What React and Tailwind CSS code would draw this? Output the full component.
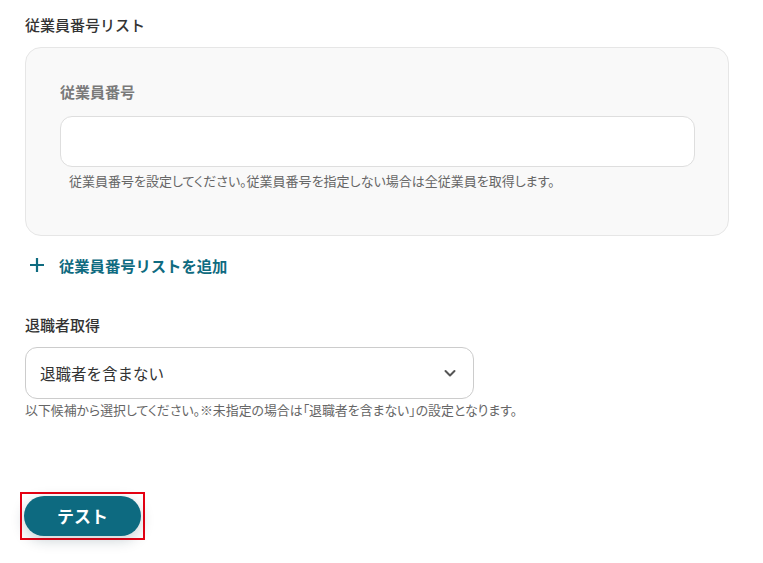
export default function App() {
  return (
    <div
      className="w-[763px] h-[563px] bg-white text-[#333] overflow-hidden"
      style={{ fontFamily: '"Noto Sans CJK JP", "Noto Sans", sans-serif' }}
    >
      <div className="pl-[25px] pr-[34px] pt-[14px]">
        <div className="text-[15px] font-medium leading-[22px]">従業員番号リスト</div>

        <div className="mt-[11px] h-[189px] rounded-[16px] border border-[#e6e6e6] bg-[#f9f9f9] pl-[34px] pr-[33px] pt-[33px]">
          <div className="text-[15px] font-bold leading-[22px] text-[#7a7a7a]">従業員番号</div>
          <div className="mt-[13px] h-[51px] rounded-[12px] border border-[#dedede] bg-white" />
          <div className="mt-[5px] pl-[9px] text-[13px] leading-[18px] text-[#666] [font-feature-settings:'palt']">
            従業員番号を設定してください。従業員番号を指定しない場合は全従業員を取得します。
          </div>
        </div>

        <div className="mt-[18px] flex items-center gap-[14px] pl-[4px] text-[#0f6b80]">
          <svg width="16" height="16" viewBox="0 0 16 16" fill="none">
            <path d="M8 1v14M1 8h14" stroke="currentColor" strokeWidth="2.2" />
          </svg>
          <span className="text-[15.3px] font-bold leading-[22px]">従業員番号リストを追加</span>
        </div>

        <div className="mt-[38px] text-[15px] font-medium leading-[22px]">退職者取得</div>

        <div className="mt-[11px] flex h-[52px] w-[449px] items-center justify-between rounded-[12px] border border-[#cccccc] bg-white pl-[14px] pr-[16px]">
          <span className="text-[15.5px] leading-[22px] text-[#333]">退職者を含まない</span>
          <svg width="14" height="14" viewBox="0 0 14 14" fill="none">
            <path d="M2.5 5l4.5 4.5L11.5 5" stroke="#555" strokeWidth="2" strokeLinecap="round" strokeLinejoin="round" />
          </svg>
        </div>
        <div className="mt-[2px] text-[12.9px] leading-[18px] text-[#666] [font-feature-settings:'palt']">
          以下候補から選択してください。※未指定の場合は「退職者を含まない」の設定となります。
        </div>

        <div className="mt-[73px] ml-[-5px] inline-block border-2 border-[#e60012] p-[2px]">
          <div className="flex h-[40px] w-[117px] items-center justify-center rounded-full bg-[#0d6a80] text-[17px] font-bold text-white shadow-[0_4px_14px_rgba(0,40,60,0.22)]">
            テスト
          </div>
        </div>
      </div>
    </div>
  );
}
